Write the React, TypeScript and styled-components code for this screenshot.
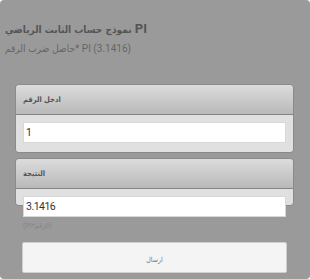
import React from "react";
import styled, { createGlobalStyle } from "styled-components";

const Global = createGlobalStyle`
  html, body { margin: 0; padding: 0; background: #ffffff; }
  * { box-sizing: border-box; }
`;

const Page = styled.div`
  width: 310px;
  height: 279px;
  background: #9a9a9a;
  border-radius: 4px;
  padding-top: 21px;
  font-family: Roboto, "DejaVu Sans Condensed", "DejaVu Sans", sans-serif;
  overflow: hidden;
`;

const Ar = styled.span<{ $size: number }>`
  font-family: "DejaVu Sans Condensed", "DejaVu Sans", sans-serif;
  font-size: ${(p) => p.$size}px;
`;

const Title = styled.h1`
  margin: 0 0 0 5px;
  font-size: 13px;
  line-height: 16px;
  font-weight: bold;
  color: #555555;
`;

const Subtitle = styled.p`
  margin: 4px 0 0 5px;
  font-size: 10px;
  line-height: 14px;
  color: #666666;
`;

const Form = styled.div`
  margin: 28px 16px 0 15px;
  display: flex;
  flex-direction: column;
`;

const Panel = styled.section<{ $gap?: number }>`
  margin-top: ${(p) => p.$gap ?? 0}px;
  border: 1px solid #8a8a8a;
  border-radius: 4px;
`;

const Header = styled.div`
  height: 30px;
  display: flex;
  align-items: center;
  padding-left: 7px;
  background: linear-gradient(#dcdcdc, #b9b9b9);
  border-bottom: 1px solid #858585;
  border-radius: 3px 3px 0 0;
  font-weight: bold;
  color: #555555;
`;

const Body = styled.div<{ $height?: number }>`
  background: #e0e0e0;
  padding: 7px 7px 9px 7px;
  border-radius: 0 0 3px 3px;
  height: ${(p) => (p.$height ? `${p.$height}px` : "auto")};
`;

const Field = styled.input`
  display: block;
  width: 100%;
  height: 21px;
  margin: 0;
  padding: 0 2px;
  border: 1px solid #d8d8d8;
  background: #ffffff;
  font-family: Roboto, sans-serif;
  font-size: 10.5px;
  letter-spacing: -0.5px;
  color: #333333;
  outline: none;
`;

const Helper = styled.div`
  margin: 15px 0 0 8px;
  font-size: 7px;
  line-height: 10px;
  color: #858585;
`;

const Button = styled.button`
  margin: 11px 7px 0 7px;
  height: 31px;
  border: 1px solid #cfcfcf;
  border-radius: 2px;
  background: #f4f4f4;
  color: #777777;
  padding: 0;
`;

export default function App() {
  return (
    <>
      <Global />
      <Page>
        <Title>
          <Ar $size={10}>نموذج حساب الثابت الرياضي</Ar> PI
        </Title>
        <Subtitle>
          <Ar $size={10}>حاصل ضرب الرقم</Ar>* PI (3.1416)
        </Subtitle>
        <Form>
          <Panel>
            <Header>
              <Ar $size={7.5}>ادخل الرقم</Ar>
            </Header>
            <Body>
              <Field defaultValue="1" />
            </Body>
          </Panel>
          <Panel $gap={5}>
            <Header>
              <Ar $size={7.5}>النتيجة</Ar>
            </Header>
            <Body $height={15}>
              <Field defaultValue="3.1416" readOnly />
            </Body>
          </Panel>
          <Helper>
            (PI*<Ar $size={7}>الرقم</Ar>)
          </Helper>
          <Button>
            <Ar $size={7}>ارسال</Ar>
          </Button>
        </Form>
      </Page>
    </>
  );
}
